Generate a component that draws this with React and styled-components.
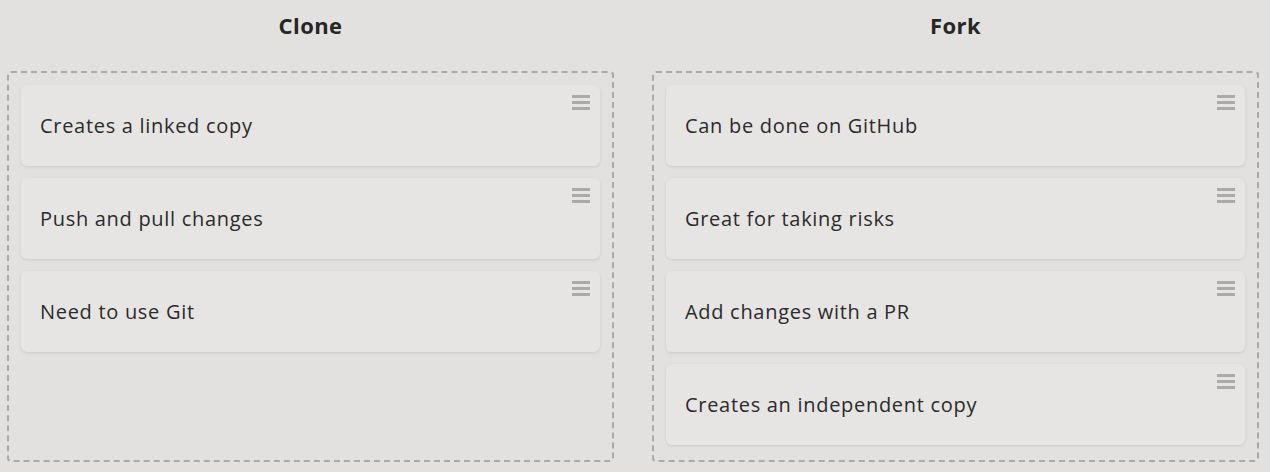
import React from 'react'
import styled, { createGlobalStyle } from 'styled-components';

const GlobalStyle = createGlobalStyle`
  html, body {
    margin: 0;
    padding: 0;
    background: #e2e1df;
  }
  body {
    font-family: 'Open Sans', 'Noto Sans', sans-serif;
    color: #2a2a2a;
  }
`;

const columns = [
  {
    title: 'Clone',
    items: ['Creates a linked copy', 'Push and pull changes', 'Need to use Git'],
  },
  {
    title: 'Fork',
    items: [
      'Can be done on GitHub',
      'Great for taking risks',
      'Add changes with a PR',
      'Creates an independent copy',
    ],
  },
];

const App = () => {
  return (
    <>
      <GlobalStyle />
      <Board>
        {columns.map((col) => (
          <Column key={col.title}>
            <Title>{col.title}</Title>
            <DropZone>
              {col.items.map((item) => (
                <Card key={item}>
                  <CardText>{item}</CardText>
                  <Handle aria-hidden="true">
                    <span />
                    <span />
                    <span />
                  </Handle>
                </Card>
              ))}
            </DropZone>
          </Column>
        ))}
      </Board>
    </>
  );
};

const Board = styled.div`
  display: grid;
  grid-template-columns: 607px 607px;
  column-gap: 38px;
  padding: 0 11px 0 7px;
`;

const Column = styled.div`
  display: flex;
  flex-direction: column;
`;

const Title = styled.h2`
  margin: 0;
  height: 71px;
  padding-top: 11px;
  box-sizing: border-box;
  text-align: center;
  font-size: 22px;
  font-weight: 700;
  line-height: 28px;
  letter-spacing: 0.4px;
  color: #262626;
`;

const DropZone = styled.div`
  height: 391px;
  box-sizing: border-box;
  border: 2px dashed #aaaaaa;
  border-radius: 4px;
  padding: 12px;
  display: flex;
  flex-direction: column;
  gap: 12px;
`;

const Card = styled.div`
  position: relative;
  height: 81px;
  flex-shrink: 0;
  box-sizing: border-box;
  display: flex;
  align-items: center;
  padding: 0 19px;
  background: #e6e5e4;
  border-radius: 6px;
  box-shadow: 0 1px 3px rgba(0, 0, 0, 0.1);
`;

const CardText = styled.span`
  font-size: 20px;
  line-height: 24px;
  letter-spacing: 0.7px;
  color: #2b2b2b;
`;

const Handle = styled.div`
  position: absolute;
  top: 10px;
  right: 10px;
  width: 18px;
  display: flex;
  flex-direction: column;
  gap: 3px;

  span {
    display: block;
    height: 3px;
    background: #aaaaaa;
  }
`;

export default App
